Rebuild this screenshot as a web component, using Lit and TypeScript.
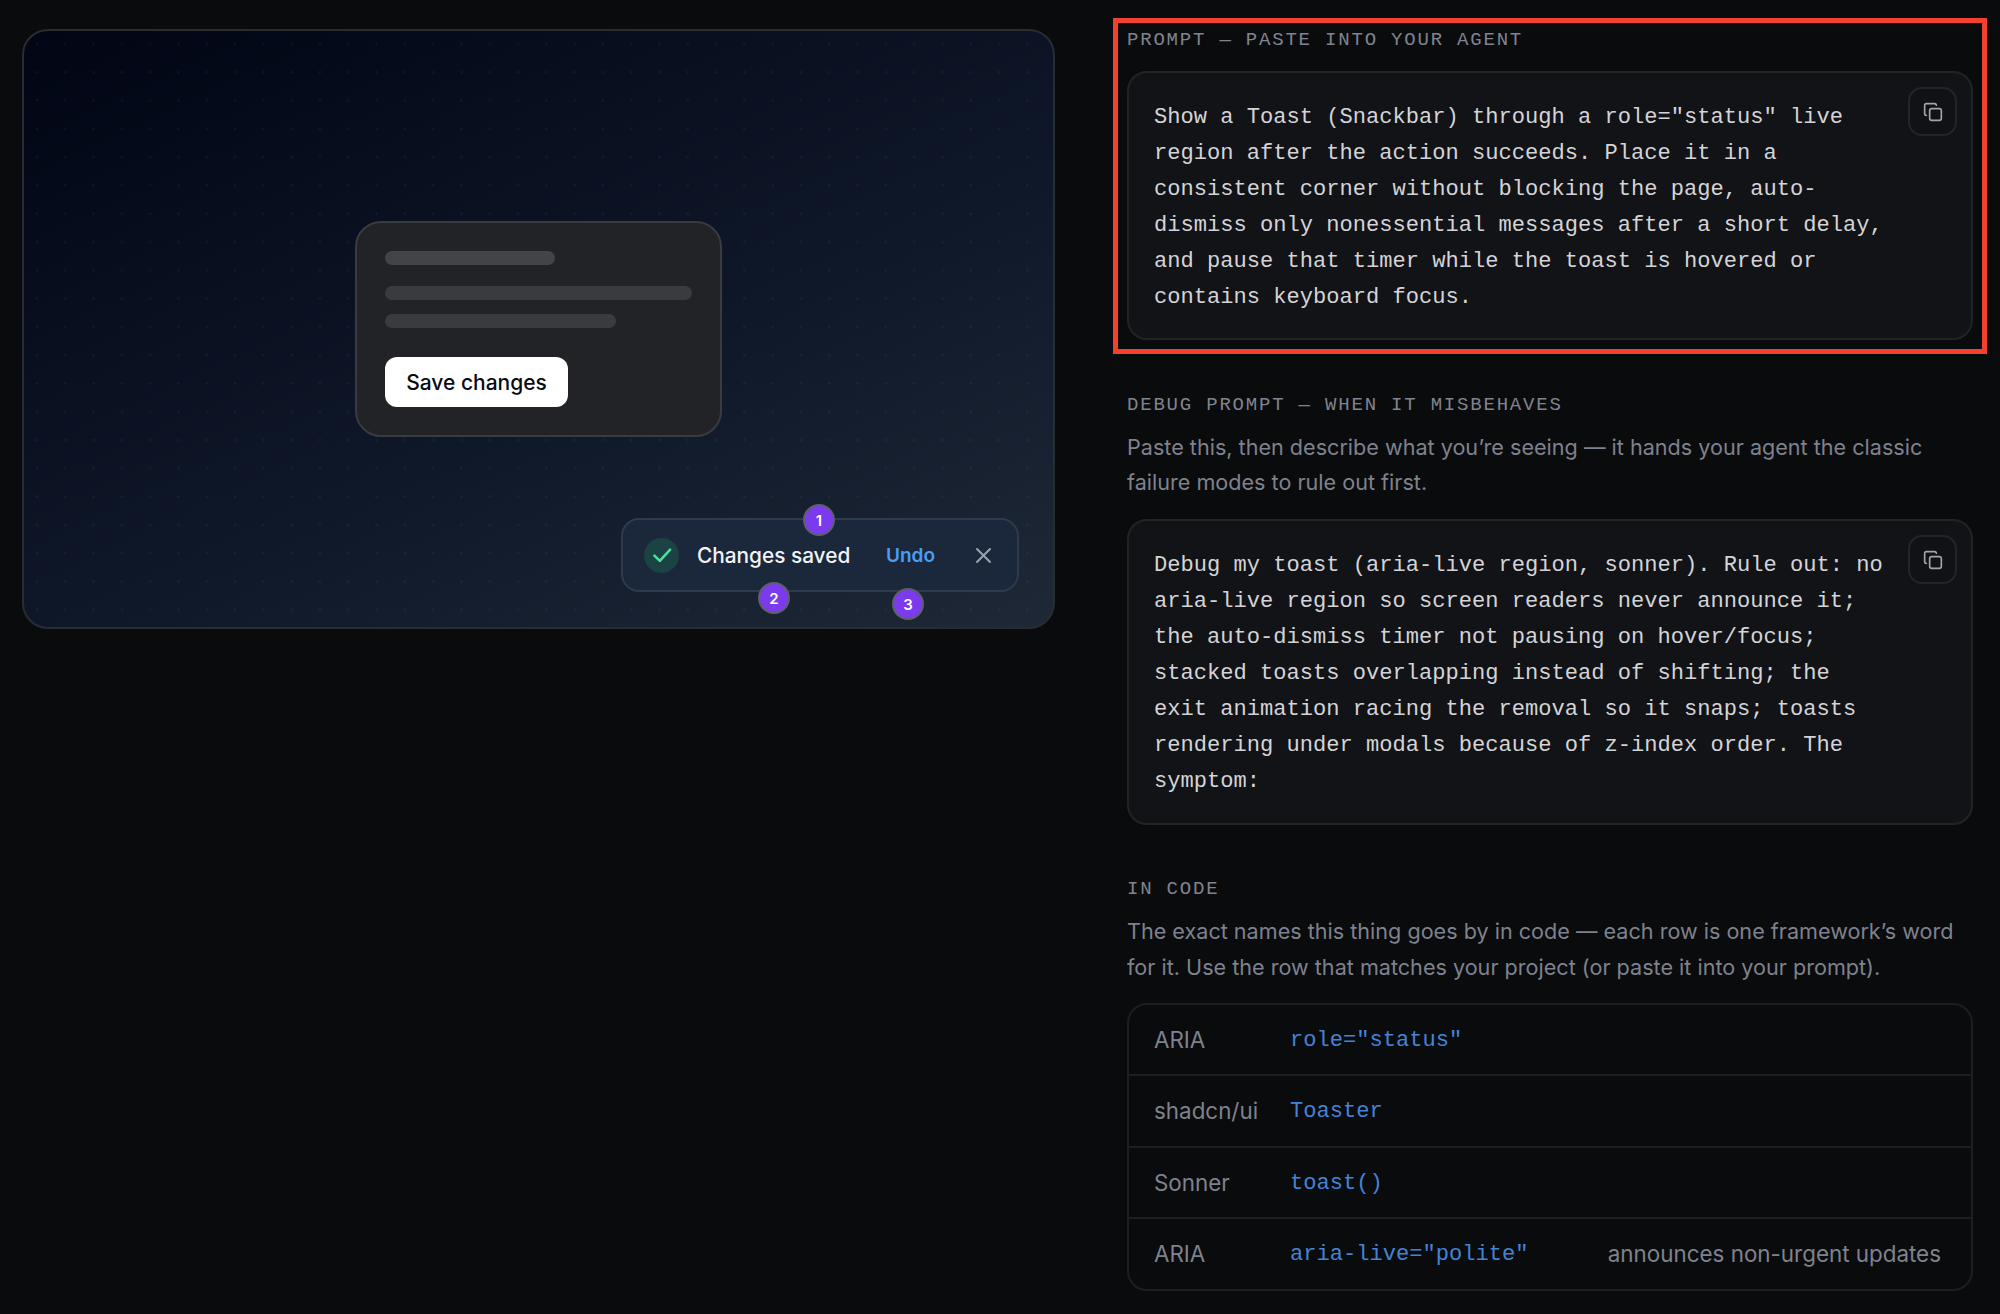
import { LitElement, css, html } from 'lit';
import { customElement } from 'lit/decorators.js';

const PROMPT = `Show a Toast (Snackbar) through a role="status" live region after the action succeeds. Place it in a consistent corner without blocking the page, auto-dismiss only nonessential messages after a short delay, and pause that timer while the toast is hovered or contains keyboard focus.`;

const DEBUG = `Debug my toast (aria-live region, sonner). Rule out: no aria-live region so screen readers never announce it; the auto-dismiss timer not pausing on hover/focus; stacked toasts overlapping instead of shifting; the exit animation racing the removal so it snaps; toasts rendering under modals because of z-index order. The symptom:`;

const ROWS = [
  { name: 'ARIA', code: 'role="status"', note: '' },
  { name: 'shadcn/ui', code: 'Toaster', note: '' },
  { name: 'Sonner', code: 'toast()', note: '' },
  { name: 'ARIA', code: 'aria-live="polite"', note: 'announces non-urgent updates' },
];

@customElement('app-root')
export class AppRoot extends LitElement {
  private copyButton() {
    return html`
      <button class="copy" aria-label="Copy">
        <svg width="20" height="20" viewBox="0 0 24 24" fill="none" stroke="currentColor" stroke-width="2" stroke-linecap="round" stroke-linejoin="round">
          <rect x="8" y="8" width="14" height="14" rx="2.5"></rect>
          <path d="M4 16c-1.1 0-2-.9-2-2V4c0-1.1.9-2 2-2h10c1.1 0 2 .9 2 2"></path>
        </svg>
      </button>
    `;
  }

  private renderPreview() {
    return html`
      <div class="preview">
        <div class="dialog">
          <div class="bar title"></div>
          <div class="bar full"></div>
          <div class="bar short"></div>
          <button class="save">Save changes</button>
        </div>
        <div class="toast" role="status">
          <span class="tick">
            <svg width="26" height="26" viewBox="0 0 24 24" fill="none" stroke="currentColor" stroke-width="2.3" stroke-linecap="round" stroke-linejoin="round">
              <path d="M5 12.5l5 5L19.5 7"></path>
            </svg>
          </span>
          <span class="message">Changes saved</span>
          <span class="undo">Undo</span>
          <svg class="close" width="17" height="17" viewBox="0 0 17 17" fill="none" stroke="currentColor" stroke-width="2" stroke-linecap="round">
            <path d="M2 2l13 13M15 2L2 15"></path>
          </svg>
          <span class="pin one">1</span>
          <span class="pin two">2</span>
          <span class="pin three">3</span>
        </div>
      </div>
    `;
  }

  render() {
    return html`
      <div class="page">
        ${this.renderPreview()}
        <div class="side">
          <section class="highlighted">
            <h3>PROMPT — PASTE INTO YOUR AGENT</h3>
            <div class="code-card">
              <p class="code">${PROMPT}</p>
              ${this.copyButton()}
            </div>
          </section>

          <section class="debug">
            <h3>DEBUG PROMPT — WHEN IT MISBEHAVES</h3>
            <p class="intro">Paste this, then describe what you’re seeing — it hands your agent the classic failure modes to rule out first.</p>
            <div class="code-card">
              <p class="code">${DEBUG}</p>
              ${this.copyButton()}
            </div>
          </section>

          <section class="names">
            <h3>IN CODE</h3>
            <p class="intro">The exact names this thing goes by in code — each row is one framework’s word for it. Use the row that matches your project (or paste it into your prompt).</p>
            <div class="table">
              ${ROWS.map(
                (r) => html`
                  <div class="row">
                    <span class="name">${r.name}</span>
                    <code>${r.code}</code>
                    <span class="note">${r.note}</span>
                  </div>
                `
              )}
            </div>
          </section>
        </div>
      </div>
    `;
  }

  static styles = css`
    :host {
      display: block;
      min-height: 1314px;
      background: #0a0b0d;
      font-family: Inter, 'Liberation Sans', sans-serif;
      overflow: hidden;
    }

    .page {
      display: grid;
      grid-template-columns: 1033px 846px;
      column-gap: 72px;
      align-items: start;
      padding: 29px 27px 0 22px;
      height: 1314px;
      box-sizing: border-box;
    }

    /* Preview */
    .preview {
      position: relative;
      height: 600px;
      box-sizing: border-box;
      display: flex;
      align-items: center;
      justify-content: center;
      border: 2px solid #282c33;
      border-radius: 26px;
      background-color: #0b1220;
      background-image:
        radial-gradient(circle, rgba(255, 255, 255, 0.045) 1px, transparent 1.5px),
        linear-gradient(155deg, #010514 0%, #0f1829 58%, #1e2836 100%);
      background-size: 28.3px 28.3px, 100% 100%;
      background-position: -1.2px -1.3px, 0 0;
    }

    .dialog {
      width: 367px;
      height: 216px;
      box-sizing: border-box;
      padding: 28px;
      border: 2px solid #3a3b3f;
      border-radius: 26px;
      background: #222326;
      display: flex;
      flex-direction: column;
      align-items: flex-start;
    }

    .bar {
      height: 14px;
      border-radius: 7px;
      background: #3a3b3f;
    }

    .bar.title {
      width: 170px;
      background: #434447;
      margin-bottom: 21px;
    }

    .bar.full {
      width: 307px;
      margin-bottom: 14px;
    }

    .bar.short {
      width: 231px;
      margin-bottom: 29px;
    }

    .save {
      width: 183px;
      height: 50px;
      padding: 0;
      border: none;
      border-radius: 12px;
      background: #fff;
      color: #0a0b12;
      font: 500 21px Inter, sans-serif;
    }

    .toast {
      position: absolute;
      right: 34px;
      bottom: 35px;
      width: 398px;
      height: 74px;
      box-sizing: border-box;
      display: flex;
      align-items: center;
      padding: 0 25px 0 21px;
      border: 2px solid #2f3a4c;
      border-radius: 18px;
      background: #1b273a;
      color: #f1f3f7;
    }

    .tick {
      width: 35px;
      height: 35px;
      flex: none;
      border-radius: 50%;
      background: #1c4343;
      color: #4fe0a0;
      display: flex;
      align-items: center;
      justify-content: center;
    }

    .message {
      margin-left: 18px;
      font-size: 20.8px;
      font-weight: 500;
      white-space: nowrap;
    }

    .undo {
      margin-left: auto;
      margin-right: 40px;
      color: #4a9df5;
      font-size: 19px;
      font-weight: 600;
    }

    .close {
      color: #9aa3b2;
      flex: none;
    }

    .pin {
      position: absolute;
      width: 32px;
      height: 32px;
      box-sizing: border-box;
      display: flex;
      align-items: center;
      justify-content: center;
      border: 2px solid #5d6068;
      border-radius: 50%;
      background: #7c3aed;
      color: #fff;
      font-size: 15px;
      font-weight: 600;
    }

    .pin.one { left: 180px; top: -16px; }
    .pin.two { left: 135px; top: 62px; }
    .pin.three { left: 269px; top: 68px; }

    /* Right column */
    .side {
      display: flex;
      flex-direction: column;
      padding-top: 3px;
    }

    .highlighted {
      outline: 5px solid #f4402f;
      outline-offset: 9px;
    }

    .debug { margin-top: 54px; }
    .names { margin-top: 53px; }

    h3 {
      margin: 0;
      font: 400 19px/22px 'Liberation Mono', monospace;
      letter-spacing: 1.8px;
      color: #80848f;
    }

    .highlighted h3 {
      line-height: 16px;
    }

    .intro {
      margin: 13.5px 0 0;
      font-size: 21.6px;
      line-height: 35.8px;
      color: #7e828c;
    }

    .names .intro { margin-top: 14px; }

    .code-card {
      position: relative;
      box-sizing: border-box;
      margin-top: 23px;
      padding: 27px 88px 22px 25px;
      border: 2px solid #222327;
      border-radius: 20px;
      background: #121316;
    }

    .debug .code-card {
      margin-top: 18px;
      padding-bottom: 23px;
    }

    .code {
      margin: 0;
      font: 400 22.08px/36px 'Liberation Mono', monospace;
      color: #d4d4d8;
    }

    .copy {
      position: absolute;
      top: 14px;
      right: 14px;
      width: 49px;
      height: 49px;
      padding: 0;
      display: flex;
      align-items: center;
      justify-content: center;
      border: 2px solid #232428;
      border-radius: 14px;
      background: #111215;
      color: #a3a3aa;
    }

    .table {
      margin-top: 17px;
      border: 2px solid #1d1e22;
      border-radius: 20px;
    }

    .row {
      height: 69.5px;
      display: flex;
      align-items: center;
      padding: 0 30px 0 25px;
      font-size: 22.4px;
      color: #7e828c;
    }

    .row + .row { border-top: 2px solid #1d1e22; box-sizing: content-box; }

    .name { width: 136px; flex: none; }

    code {
      margin-top: 2px;
      font: 400 22.08px 'Liberation Mono', monospace;
      color: #4384d6;
    }

    .note { margin-left: auto; }
  `;
}
